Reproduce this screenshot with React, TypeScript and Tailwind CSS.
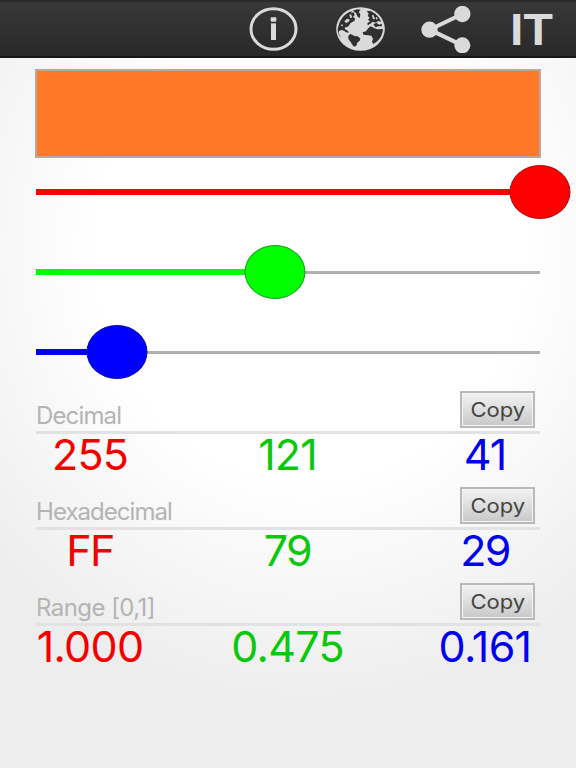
import { clsx } from 'clsx';

type Channel = {
  name: string;
  value: number;
  fill: string;
  thumb: string;
  text: string;
};

const channels: Channel[] = [
  { name: 'red', value: 255, fill: 'bg-[#fa0000]', thumb: 'bg-[#ff0000] border-[#b00808]', text: 'text-[#f20000]' },
  { name: 'green', value: 121, fill: 'bg-[#00ff00]', thumb: 'bg-[#00ff00] border-[#12a012]', text: 'text-[#0cc80c]' },
  { name: 'blue', value: 41, fill: 'bg-[#0000ee]', thumb: 'bg-[#0000ff] border-[#0808a8]', text: 'text-[#0000ee]' },
];

const formats = [
  {
    label: 'Decimal',
    format: (v: number) => String(v),
    labelStyle: 'tracking-[-0.85px]',
    valueStyle: 'tracking-[-0.9px]',
  },
  {
    label: 'Hexadecimal',
    format: (v: number) => v.toString(16).toUpperCase(),
    labelStyle: 'tracking-[-0.95px]',
    valueStyle: 'tracking-[-1.6px]',
  },
  {
    label: 'Range [0,1]',
    format: (v: number) => (v / 255).toFixed(3),
    labelStyle: 'tracking-[-0.55px]',
    valueStyle: 'tracking-[-0.7px]',
  },
];

const InfoIcon = () => (
  <svg className="h-11 w-[49px]" viewBox="0 0 147 132" fill="none">
    <ellipse cx="73.5" cy="66" rx="67.5" ry="60.5" stroke="#dadada" strokeWidth="9" />
    <rect x="65" y="31" width="17" height="13" rx="3" fill="#dadada" />
    <rect x="66" y="49" width="15" height="50" fill="#dadada" />
  </svg>
);

const GlobeIcon = () => (
  <svg className="h-11 w-[49px]" viewBox="0 0 147 132">
    <ellipse cx="73.5" cy="66" rx="73" ry="65.5" fill="#dadada" />
    <g fill="#303030">
      {/* North America */}
      <path d="M9 52 C14 36 25 22 40 15 L47 13 L46 18 L53 16 L56 23 L51 30 L57 34 L56 41 L49 45 L43 49 L38 57 L32 61 L28 60 L26 66 L33 70 L39 76 L33 77 L26 73 L18 69 L10 71 L8 76 C10 86 14 92 19 97 C10 89 5 79 5 66 Z" />
      <path d="M50 11 L64 7 L74 8 L68 15 L73 22 L71 34 L64 28 L60 18 Z" />
      {/* South America */}
      <path d="M37 86 L43 81 L52 85 L55 88 L63 87 L73 94 L71 101 L64 107 L61 116 L54 119 L49 113 L44 105 L37 96 Z" />
      {/* Europe */}
      <path d="M92 12 L104 12 L118 20 L128 31 L136 44 L126 42 L120 47 L110 44 L103 50 L95 55 L94 49 L102 43 L96 38 L101 32 L95 27 L98 20 Z" />
      <path d="M112 51 L122 48 L130 53 L137 50 L138 58 L127 58 L118 61 Z" />
      {/* Africa */}
      <path d="M97 63 L104 58 L114 63 L124 67 L141 66 C140 81 134 94 124 103 L112 111 L108 104 L111 95 L106 86 L97 85 L82 83 L80 76 L90 73 Z" />
    </g>
    <g fill="#dadada">
      <path d="M25 43 L33 35 L42 38 L37 45 L30 48 Z" />
      <path d="M40 23 L45 22 L49 31 L43 34 Z" />
      <path d="M14 54 L21 52 L19 59 Z" />
      <path d="M108 25 L112 23 L117 36 L111 37 Z" />
      <path d="M121 29 L125 34 L122 38 L119 34 Z" />
    </g>
  </svg>
);

const ShareIcon = () => (
  <svg className="h-[47px] w-[50px]" viewBox="0 0 150 141" fill="#dadada">
    <path d="M124 24 L26 71 L124 118" fill="none" stroke="#dadada" strokeWidth="12" />
    <circle cx="124" cy="24" r="24.5" />
    <circle cx="25.5" cy="71" r="24.5" />
    <circle cx="124" cy="118" r="24" />
  </svg>
);

const Header = () => (
  <header className="flex h-[58px] items-center border-t-2 border-b-2 border-t-[#2a2a2a] border-b-[#171717] bg-linear-to-b from-[#383838] to-[#292929] pl-[249px]">
    <button aria-label="Info">
      <InfoIcon />
    </button>
    <button aria-label="Language" className="ml-[38px]">
      <GlobeIcon />
    </button>
    <button aria-label="Share" className="ml-[36px]">
      <ShareIcon />
    </button>
    <button className="ml-[39px] w-12 origin-left scale-x-[1.07] text-left font-['Liberation_Sans',sans-serif] text-[45px] leading-none font-bold text-[#dadada]">
      IT
    </button>
  </header>
);

const Slider = ({ channel }: { channel: Channel }) => {
  const percent = `${(channel.value / 255) * 100}%`;

  return (
    <div className="relative flex h-20 items-center">
      <div className="h-[3px] w-full bg-[#b0b0b0]" />
      <div className={clsx('absolute left-0 h-[6px]', channel.fill)} style={{ width: percent }} />
      <div
        className={clsx('absolute h-[54px] w-[61px] -translate-x-1/2 rounded-[50%] border', channel.thumb)}
        style={{ left: percent }}
      />
    </div>
  );
};

const CopyButton = () => (
  <button className="mr-[5px] flex h-[37px] w-[75px] items-center justify-center border-2 border-[#b9b9b9] bg-linear-to-b from-[#f3f3f3] to-[#c8c8c8] text-[20px] text-[#444] shadow-[inset_0_0_0_1px_#f4f4f4]">
    <span className="scale-x-110">Copy</span>
  </button>
);

export default function App() {
  return (
    <div className="h-[768px] w-[576px] overflow-hidden bg-[radial-gradient(ellipse_430px_460px_at_310px_250px,#ffffff_0%,#ffffff_50%,#ededed_100%)] font-[Inter,sans-serif]">
      <Header />
      <main className="px-9">
        <div className="-mx-[1px] mt-[11px] h-[89px] border-2 border-[#b5aaa2] bg-[#ff7929]" />
        <div className="-mt-[6px]">
          {channels.map((channel) => (
            <Slider key={channel.name} channel={channel} />
          ))}
        </div>
        <div className="-mt-[1px]">
          {formats.map(({ label, format, labelStyle, valueStyle }) => (
            <section key={label} className="h-24">
              <div className="flex h-[43px] items-start justify-between border-b-[3px] border-[#e2e2e2]">
                <h2 className={clsx('mt-[9px] text-[24px] leading-8 text-[#b4b4b4]', labelStyle)}>{label}</h2>
                <CopyButton />
              </div>
              <div className={clsx('flex justify-between pr-[1px] text-[43px] leading-[40px] font-[370]', valueStyle)}>
                {channels.map(({ name, value, text }) => (
                  <span key={name} className={clsx('flex w-[108px] justify-center', text)}>
                    {format(value)}
                  </span>
                ))}
              </div>
            </section>
          ))}
        </div>
      </main>
    </div>
  );
}
